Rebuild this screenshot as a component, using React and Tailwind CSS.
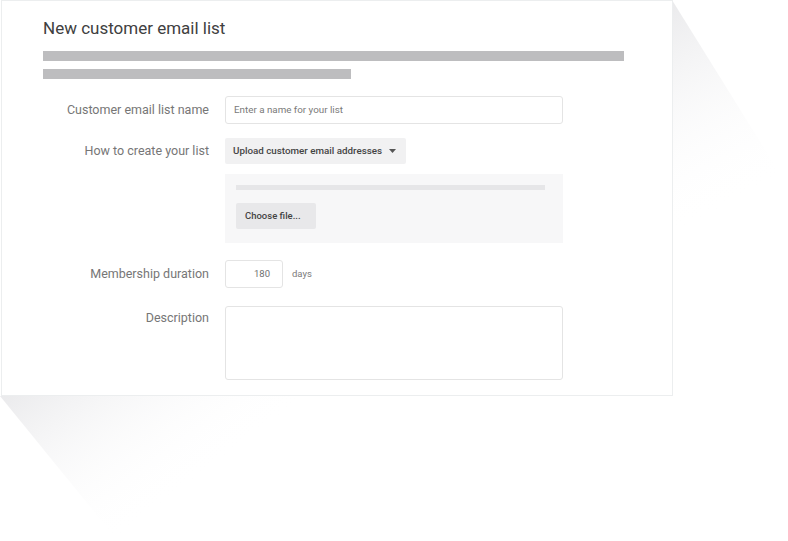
import React from 'react';

const font = { fontFamily: 'Roboto, "Noto Sans", Arial, sans-serif' };

const Row = ({ label, top = false, children }) => (
  <div className={`flex gap-4 ${top ? 'items-start' : 'items-center'}`}>
    <div className={`w-[166px] shrink-0 text-right text-[12.5px] text-[#767676] ${top ? 'pt-[3px]' : ''}`}>
      {label}
    </div>
    {children}
  </div>
);

const Shadows = () => (
  <svg className="absolute inset-0 h-full w-full" viewBox="0 0 788 541">
    <defs>
      <linearGradient id="shR" gradientUnits="userSpaceOnUse" x1="672" y1="0" x2="770" y2="185">
        <stop offset="0" stopColor="#eaeaec" />
        <stop offset="1" stopColor="#ffffff" stopOpacity="0" />
      </linearGradient>
      <linearGradient id="shB" gradientUnits="userSpaceOnUse" x1="0" y1="396" x2="110" y2="545">
        <stop offset="0" stopColor="#eaeaec" />
        <stop offset="1" stopColor="#ffffff" stopOpacity="0" />
      </linearGradient>
    </defs>
    <polygon points="672,0 792,193 672,260" fill="url(#shR)" />
    <polygon points="0,396 118,541 440,396" fill="url(#shB)" />
  </svg>
);

export default function App() {
  return (
    <div className="relative h-[541px] w-[788px] overflow-hidden bg-white" style={font}>
      <Shadows />
      <div className="relative pl-[1px]">
        <div className="flex h-[396px] w-[672px] flex-col border border-[#eceeef] bg-white pl-[41px] pt-[17px]">
          <h1 className="text-[17px] leading-[20px] text-[#404040]">New customer email list</h1>
          <div className="mt-[13px] h-[10px] w-[581px] bg-[#bdbdbf]" />
          <div className="mt-[8px] h-[10px] w-[308px] bg-[#bdbdbf]" />

          <div className="mt-[17px] flex flex-col">
            <Row label="Customer email list name">
              <div className="flex h-[28px] w-[338px] items-center rounded-[3px] border border-[#e4e4e4] px-[8px] text-[9.8px] text-[#7a7a7a]">
                Enter a name for your list
              </div>
            </Row>

            <div className="mt-[14px]">
              <Row label="How to create your list">
                <div className="flex h-[26px] w-[181px] items-center justify-between rounded-[2px] bg-[#f1f1f2] pl-[8px] pr-[10px] text-[9.8px] font-medium text-[#444]">
                  <span>Upload customer email addresses</span>
                  <svg width="7" height="4" viewBox="0 0 7 4">
                    <polygon points="0,0 7,0 3.5,4" fill="#555" />
                  </svg>
                </div>
              </Row>
            </div>

            <div className="mt-[10px] flex gap-4">
              <div className="w-[166px] shrink-0" />
              <div className="flex h-[69px] w-[338px] flex-col bg-[#f7f7f8] px-[11px] pt-[11px]">
                <div className="h-[5px] w-[309px] bg-[#e6e6e8]" />
                <div className="mt-[13px] flex h-[26px] w-[80px] items-center rounded-[2px] bg-[#e8e8ea] pl-[9px] text-[9.5px] font-medium text-[#444]">
                  Choose file...
                </div>
              </div>
            </div>

            <div className="mt-[17px]">
              <Row label="Membership duration">
                <div className="flex items-center gap-[9px]">
                  <div className="flex h-[28px] w-[58px] items-center justify-end rounded-[3px] border border-[#e4e4e4] pr-[12px] text-[9.5px] text-[#6f6f6f]">
                    180
                  </div>
                  <span className="text-[9.5px] text-[#7a7a7a]">days</span>
                </div>
              </Row>
            </div>

            <div className="mt-[18px]">
              <Row label="Description" top>
                <div className="h-[74px] w-[338px] rounded-[3px] border border-[#e4e4e4]" />
              </Row>
            </div>
          </div>
        </div>
      </div>
    </div>
  );
}
